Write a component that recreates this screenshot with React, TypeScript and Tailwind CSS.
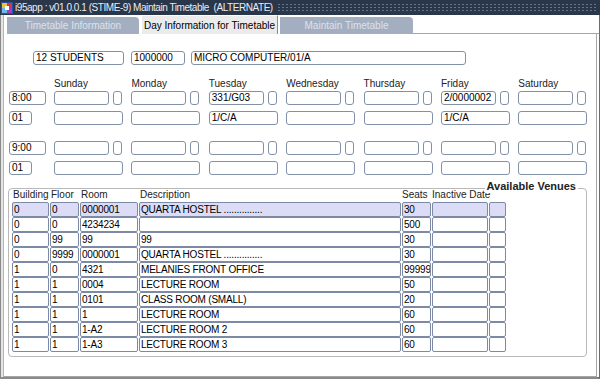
import React from 'react';

const days = ['Sunday', 'Monday', 'Tuesday', 'Wednesday', 'Thursday', 'Friday', 'Saturday'];

const slots = [
  { time: '8:00', code: '01', top: ['', '', '331/G03', '', '', '2/0000002', ''], bottom: ['', '', '1/C/A', '', '', '1/C/A', ''] },
  { time: '9:00', code: '01', top: ['', '', '', '', '', '', ''], bottom: ['', '', '', '', '', '', ''] },
];

const venues = [
  ['0', '0', '0000001', 'QUARTA HOSTEL ...............', '30'],
  ['0', '0', '4234234', '', '500'],
  ['0', '99', '99', '99', '30'],
  ['0', '9999', '0000001', 'QUARTA HOSTEL ...............', '30'],
  ['1', '0', '4321', 'MELANIES FRONT OFFICE', '99999'],
  ['1', '1', '0004', 'LECTURE ROOM', '50'],
  ['1', '1', '0101', 'CLASS ROOM (SMALL)', '20'],
  ['1', '1', '1', 'LECTURE ROOM', '60'],
  ['1', '1', '1-A2', 'LECTURE ROOM 2', '60'],
  ['1', '1', '1-A3', 'LECTURE ROOM 3', '60'],
];

const colWidths = ['w-[37px]', 'w-[29px]', 'w-[58px]', 'w-[262px]', 'w-[29px]', 'w-[56px]', 'w-[17px]'];

const Field = ({ value = '', className = '' }: { value?: string; className?: string }) => (
  <div
    className={`h-[14px] shrink-0 overflow-hidden whitespace-nowrap rounded-[3px] border border-[#8391a8] bg-white pl-[2px] text-[10px] leading-[12px] text-black ${className}`}
  >
    {value}
  </div>
);

const Cell = ({ value, width, selected }: { value: string; width: string; selected: boolean }) => (
  <div
    className={`h-[15px] shrink-0 overflow-hidden whitespace-nowrap rounded-[2px] border border-[#7c8aa5] pl-[1px] text-[10px] leading-[13px] tracking-[-0.2px] text-black ${width} ${
      selected ? 'bg-[#dcdcf6]' : 'bg-white'
    }`}
  >
    {value}
  </div>
);

const AppIcon = () => (
  <svg width="12" height="12" viewBox="0 0 12 12">
    <rect x="0" y="0" width="12" height="12" fill="#2a4fa8" />
    <rect x="1" y="1" width="5" height="5" fill="#e8c33a" />
    <rect x="6" y="1" width="5" height="5" fill="#d23a3a" />
    <rect x="1" y="6" width="5" height="5" fill="#6fb5f0" />
    <rect x="6" y="6" width="5" height="5" fill="#a43cc4" />
    <rect x="4" y="4" width="4" height="4" fill="#ffffff" />
  </svg>
);

export default function App() {
  return (
    <div className="flex h-[379px] w-[600px] flex-col overflow-hidden bg-white font-['Liberation_Sans',Arial,sans-serif]">
      {/* title bar */}
      <div className="flex h-[15px] shrink-0 items-center bg-[#2a374b] pl-[1px] pr-[3px]">
        <AppIcon />
        <span className="ml-[2px] whitespace-nowrap text-[10px] leading-[12px] tracking-[-0.45px] text-[#e8ecf2]">
          i95app : v01.0.0.1 (STIME-9) Maintain Timetable&nbsp; (ALTERNATE)
        </span>
        <div className="ml-[4px] h-[9px] flex-1 bg-[radial-gradient(circle,#64748b_0.8px,transparent_1px)] bg-[length:4px_3px]" />
      </div>

      <div className="flex flex-1 border-b-[2px] border-l border-r-[3px] border-b-[#8a8a8a] border-l-[#8a8a8a] border-r-[#6b6b6b] bg-[#ececec]">
        <div className="w-[3px] shrink-0 border-r border-[#b5b5b5] bg-[#e4e4e4]" />
        <div className="flex flex-1 flex-col bg-white">
          {/* tabs */}
          <div className="flex h-[19px] shrink-0 items-end pl-[3px]">
            <div className="flex h-[17px] w-[132px] items-center justify-center rounded-tr-[4px] bg-[#a3afc1] text-[10px] text-[#dde2ea]">
              Timetable Information
            </div>
            <div className="ml-[2px] flex h-[19px] w-[137px] items-center justify-center border-l border-t border-r border-l-white border-t-white border-r-[#8d8d8d] bg-[#ebebeb] text-[10px] text-black">
              Day Information for Timetable
            </div>
            <div className="ml-[2px] flex h-[17px] w-[133px] items-center justify-center rounded-tr-[4px] bg-[#a3afc1] text-[10px] text-[#dde2ea]">
              Maintain Timetable
            </div>
            <div className="h-[19px] flex-1 border-b border-[#a6a6a6]" />
          </div>

          {/* panel */}
          <div className="mr-[2px] flex flex-1 flex-col border-r border-b border-[#a6a6a6] pb-[12px]">
            <div className="mt-[17px] flex pl-[29px]">
              <Field value="12 STUDENTS" className="w-[91px]" />
              <Field value="1000000" className="ml-[7px] w-[54px]" />
              <Field value="MICRO COMPUTER/01/A" className="ml-[6px] w-[275px]" />
            </div>

            <div className="mt-[13px] flex pl-[50px]">
              {days.map((d) => (
                <div key={d} className="w-[77.4px] shrink-0 text-[10px] leading-[12px] text-[#222]">
                  {d}
                </div>
              ))}
            </div>

            {slots.map((s, i) => (
              <div key={i} className={i === 0 ? 'mt-[1px]' : 'mt-[16px]'}>
                <div className="flex">
                  <div className="w-[50px] shrink-0 pl-[5px]">
                    <Field value={s.time} className="w-[37px]" />
                  </div>
                  {s.top.map((v, j) => (
                    <div key={j} className="flex w-[77.4px] shrink-0">
                      <Field value={v} className="w-[55px]" />
                      <div className="ml-[4px] h-[14px] w-[9px] rounded-[3px] border border-[#8391a8] bg-white" />
                    </div>
                  ))}
                </div>
                <div className="mt-[6px] flex">
                  <div className="w-[50px] shrink-0 pl-[5px]">
                    <Field value={s.code} className="w-[23px]" />
                  </div>
                  {s.bottom.map((v, j) => (
                    <div key={j} className="w-[77.4px] shrink-0">
                      <Field value={v} className="w-[69px]" />
                    </div>
                  ))}
                </div>
              </div>
            ))}

            {/* venues frame */}
            <div className="relative ml-[4px] mt-[13px] w-[579px] rounded-[4px] border border-[#b9b9b9] pb-[4px] pl-[3px]">
              <span className="absolute right-[8px] top-[-10px] bg-white px-[2px] text-[11px] font-bold leading-[14px] text-[#222]">
                Available Venues
              </span>
              <div className="flex h-[13px] text-[10px] leading-[12px] text-[#222]">
                <div className="w-[38px] shrink-0 pl-[1px]">Building</div>
                <div className="w-[30px] shrink-0 pl-[1px]">Floor</div>
                <div className="w-[59px] shrink-0 pl-[1px]">Room</div>
                <div className="w-[263px] shrink-0 pl-[1px]">Description</div>
                <div className="w-[30px] shrink-0">Seats</div>
                <div className="shrink-0">Inactive Date</div>
              </div>
              {venues.map((r, i) => (
                <div key={i} className="flex gap-[1px]">
                  {colWidths.map((w, j) => (
                    <Cell key={j} value={r[j] ?? ''} width={w} selected={i === 0} />
                  ))}
                </div>
              ))}
            </div>
          </div>
        </div>
      </div>
    </div>
  );
}
